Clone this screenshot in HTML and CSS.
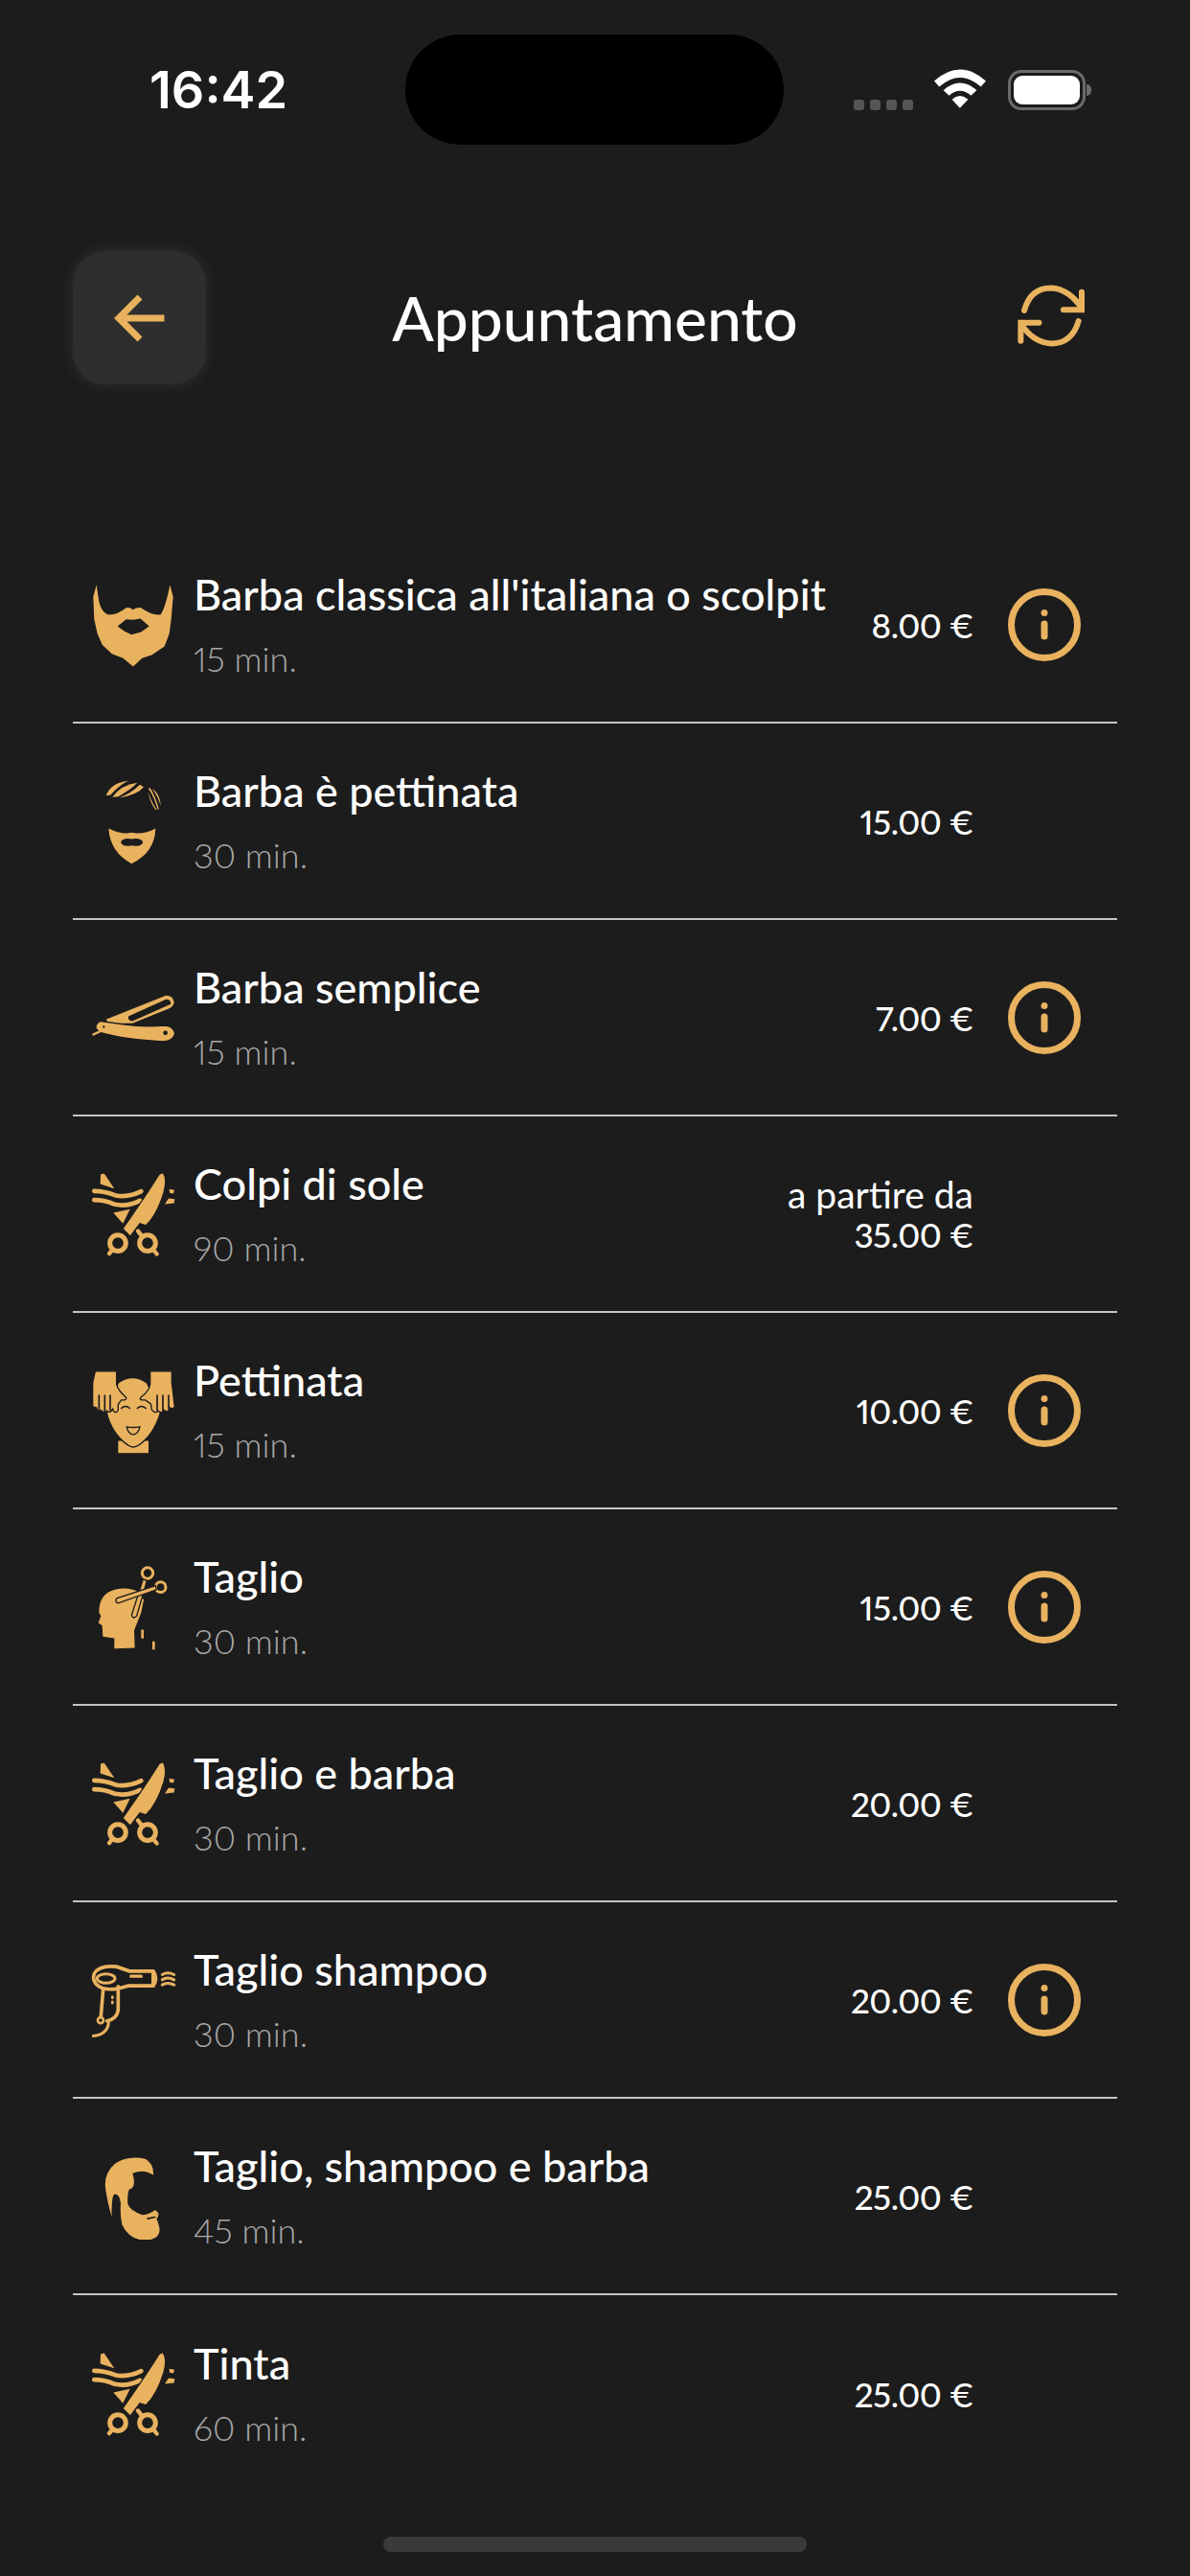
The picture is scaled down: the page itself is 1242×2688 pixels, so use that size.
FILE: index.html
```html
<!DOCTYPE html>
<html lang="it">

<head>
    <meta charset="utf-8">
    <title>Appuntamento</title>
    <link rel="stylesheet" href="styles.css">
</head>

<body>
    <svg class="defs" xmlns="http://www.w3.org/2000/svg">
        <symbol id="scissors" viewBox="72 67.5 270 270">
            <path class="fill" d="M105 78L116 75L148 122L104 108Z" />
            <path class="fill" d="M145 198L197 187L175 232Z" />
            <path class="line" stroke-width="14" d="M85 130Q118 130 150 143Q190 152 232 131" />
            <path class="line" stroke-width="14" d="M85 158Q118 158 150 172Q190 180 228 160" />
            <path class="fill gap" d="M300 72Q315 90 303 135Q282 205 247 238L228 232L198 272L174 248Q250 140 288 78Z" />
            <circle class="line" stroke-width="15" cx="159" cy="293" r="25" />
            <circle class="line" stroke-width="15" cx="252" cy="293" r="25" />
            <path class="line" stroke-width="13" d="M222 255L232 268M132 326L140 316M281 327L272 316" />
            <path class="fill" d="M320 124L336 127L333 138L321 136Z" />
            <path class="fill" d="M318 153L337 155L335 168L306 171Z" />
        </symbol>
        <symbol id="info" viewBox="0 0 76 76">
            <circle class="line" stroke-width="7" cx="38" cy="38" r="34.5" />
            <circle class="fill" cx="38" cy="25.500" r="3.500" />
            <path class="line" stroke-width="7" d="M38 37V50" />
        </symbol>
    </svg>

    <div class="status">
        <span class="clock">16:42</span>
        <div class="island"></div>
        <div class="status-right">
            <div class="dots"><i></i><i></i><i></i><i></i></div>
            <svg class="wifi" viewBox="285 65 163 122">
                <path d="M285 102Q366 30 448 102L432 120Q366 62 301 120Z" />
                <path d="M314 131Q366 85 419 131L401 148Q366 118 332 148Z" />
                <path d="M341 160Q366 138 392 160L366 187Z" />
            </svg>
            <div class="battery">
                <div class="battery-fill"></div>
            </div>
            <div class="battery-cap"></div>
        </div>
    </div>

    <header class="top">
        <div class="back">
            <svg viewBox="0 0 60 60" width="60" height="60">
                <path class="line arrow" stroke-width="7" d="M30 8L8 30L30 52M10 30H55.500" />
            </svg>
        </div>
        <h1 class="title">Appuntamento</h1>
        <svg class="refresh" viewBox="545 742 212 193">
            <path class="line" stroke-width="18" d="M566 822Q585 752 650 752Q705 755 745 815M745 765V820H688" />
            <path class="line" stroke-width="18" d="M735 855Q715 925 650 925Q595 922 556 865M555 917V860H612" />
        </svg>
    </header>

    <main class="list">
        <div class="row">
            <svg class="pic" viewBox="102 142.500 270 270">
                <path class="fill" fill-rule="evenodd" d="M122 152L130 205Q138 240 160 246Q190 245 215 224Q228 222 236 230Q248 222 262 224Q290 246 322 246Q338 225 352 152L362 190L356 260L350 305L335 345L295 372L265 382L237 408L205 382L170 368L140 340L125 305L115 260L112 190ZM188 282L215 260L237 262L260 258L287 282L262 300L232 308L210 298Z" />
            </svg>
            <div class="body">
                <div class="name">Barba classica all'italiana o scolpita</div>
                <div class="time">15 min.</div>
            </div>
            <div class="price">8.00 €</div>
            <div class="slot"><svg class="info"><use href="#info" /></svg></div>
        </div>

        <div class="row">
            <svg class="pic" viewBox="102 97.500 270 270">
                <path class="fill" d="M152 152Q168 112 222 106Q195 118 166 150Z" />
                <path class="fill" d="M172 157Q200 118 250 112Q228 135 190 155Z" />
                <path class="fill" d="M192 159Q228 148 258 118L270 125Q250 150 192 159Z" />
                <path class="fill" d="M284 130Q300 150 314 195L318 195Q305 150 290 128ZM296 130Q320 145 324 185Q312 150 296 130ZM284 140Q295 175 312 197L306 195Q288 170 284 140Z" />
                <path class="fill" fill-rule="evenodd" d="M160 255Q200 275 232 268Q270 275 307 255Q305 330 232 365Q165 330 160 255ZM198 298Q205 283 232 288Q260 283 268 298Q262 315 232 308Q205 315 198 298Z" />
            </svg>
            <div class="body">
                <div class="name">Barba è pettinata</div>
                <div class="time">30 min.</div>
            </div>
            <div class="price">15.00 €</div>
            <div class="slot"></div>
        </div>

        <div class="row">
            <svg class="pic" viewBox="72 52.500 270 270">
                <path class="fill" fill-rule="evenodd" d="M122 193L310 118Q332 118 335 140Q332 152 320 158L205 205L130 205ZM192 183L310 130Q325 130 325 145L205 198Q190 198 192 183Z" />
                <path class="fill gap" d="M105 198Q88 205 90 220Q100 235 120 238Q180 255 300 262Q335 260 338 235Q330 212 305 212Q240 218 175 208Z" />
                <path class="line" stroke-width="7" d="M82 240L104 230" />
                <circle class="cut" cx="308" cy="235" r="7" />
                <circle class="cut" cx="115" cy="216" r="3.500" />
            </svg>
            <div class="body">
                <div class="name">Barba semplice</div>
                <div class="time">15 min.</div>
            </div>
            <div class="price">7.00 €</div>
            <div class="slot"><svg class="info"><use href="#info" /></svg></div>
        </div>

        <div class="row">
            <svg class="pic"><use href="#scissors" /></svg>
            <div class="body">
                <div class="name">Colpi di sole</div>
                <div class="time">90 min.</div>
            </div>
            <div class="price"><span class="from">a partire da</span>35.00 €</div>
            <div class="slot"></div>
        </div>

        <div class="row">
            <svg class="pic" viewBox="72 82.500 270 270">
                <path class="fill" d="M160 312H255V350H160Z" />
                <path class="fill gap" d="M160 130Q205 98 250 130L292 225Q270 295 225 325Q207 338 190 325Q140 290 124 225Z" />
                <path class="fill gap" d="M88 94H155V135Q160 155 185 176Q188 186 170 184L160 198V215Q155 228 145 218L143 212Q135 228 125 218Q115 228 106 216Q95 222 92 208L80 205V130Z" />
                <path class="fill gap" d="M260 94H328V130L337 205Q330 215 322 208Q315 228 305 216Q295 228 285 218Q275 228 265 214L262 196L245 184Q222 186 232 175Q258 155 260 135Z" />
                <path class="cut-line" d="M100 170V215M118 170V218M135 170V216M282 170V216M300 170V218M318 170V210M170 210Q183 198 196 210M220 210Q233 198 246 210" />
                <path class="fill gap" d="M187 268Q207 272 228 268Q222 292 207 292Q192 292 187 268Z" />
            </svg>
            <div class="body">
                <div class="name">Pettinata</div>
                <div class="time">15 min.</div>
            </div>
            <div class="price">10.00 €</div>
            <div class="slot"><svg class="info"><use href="#info" /></svg></div>
        </div>

        <div class="row">
            <svg class="pic" viewBox="72 697.500 270 270">
                <path class="fill" d="M100 850Q100 790 150 778Q190 768 225 785L240 810L232 850L210 905L212 960L148 962V930L112 925L110 890L98 882L106 860Z" />
                <circle class="line" stroke-width="9" cx="252" cy="726" r="17" />
                <circle class="line" stroke-width="9" cx="293" cy="770" r="16" />
                <path class="fill gap" d="M238 745L250 750L218 860Q208 872 202 858Z" />
                <path class="fill gap" d="M277 765L280 778L160 820Q148 815 155 805Z" />
                <path class="fill" d="M232 903H240V931H232ZM267 940H275V965H267Z" />
            </svg>
            <div class="body">
                <div class="name">Taglio</div>
                <div class="time">30 min.</div>
            </div>
            <div class="price">15.00 €</div>
            <div class="slot"><svg class="info"><use href="#info" /></svg></div>
        </div>

        <div class="row">
            <svg class="pic"><use href="#scissors" /></svg>
            <div class="body">
                <div class="name">Taglio e barba</div>
                <div class="time">30 min.</div>
            </div>
            <div class="price">20.00 €</div>
            <div class="slot"></div>
        </div>

        <div class="row">
            <svg class="pic" viewBox="72 97.500 270 270">
                <path class="line" stroke-width="11" d="M155 128Q100 122 85 150Q75 180 110 195Q140 205 190 188H270Q285 165 270 142H195Q175 135 155 128Z" />
                <ellipse class="line" stroke-width="9" cx="122" cy="165" rx="28" ry="14" />
                <path class="line" stroke-width="10" d="M200 158H232M269 148V183" />
                <path class="line" stroke-width="11" d="M113 200L106 283M160 190V265Q155 292 125 298" />
                <circle class="line" stroke-width="8" cx="105" cy="296" r="9" />
                <path class="line" stroke-width="9" d="M130 305Q125 340 82 345" />
                <path class="line" stroke-width="8" d="M142 222V226M142 238V242" />
                <path class="line" stroke-width="9" d="M298 153Q315 143 335 153M298 169Q315 158 335 169M298 185Q315 175 335 185" />
            </svg>
            <div class="body">
                <div class="name">Taglio shampoo</div>
                <div class="time">30 min.</div>
            </div>
            <div class="price">20.00 €</div>
            <div class="slot"><svg class="info"><use href="#info" /></svg></div>
        </div>

        <div class="row">
            <svg class="pic" viewBox="72 712.500 270 270">
                <path class="fill" d="M270 780Q272 745 245 730Q190 718 150 745Q115 775 120 820Q125 860 140 912Q138 850 148 840Q165 838 168 870Q165 900 172 935Q195 985 250 985Q290 980 290 950Q285 925 280 918Q295 900 275 890Q255 905 235 905Q195 890 190 870Q188 835 195 825Q218 820 205 775Q240 760 270 780Z" />
                <path class="cut-line" d="M252 917L275 912" />
                <circle class="cut" cx="162" cy="892" r="5" />
            </svg>
            <div class="body">
                <div class="name">Taglio, shampoo e barba</div>
                <div class="time">45 min.</div>
            </div>
            <div class="price">25.00 €</div>
            <div class="slot"></div>
        </div>

        <div class="row">
            <svg class="pic"><use href="#scissors" /></svg>
            <div class="body">
                <div class="name">Tinta</div>
                <div class="time">60 min.</div>
            </div>
            <div class="price">25.00 €</div>
            <div class="slot"></div>
        </div>
    </main>

    <div class="home-bar"></div>
</body>

</html>
```

FILE: styles.css
```css
html,
body {
    margin: 0;
    height: 2688px;
    overflow: hidden;
}

body {
    background: #1c1c1c;
    color: #fff;
    font-family: "Lato", "Noto Sans", sans-serif;
    font-variant-numeric: proportional-nums;
}

.defs {
    display: none;
}

.fill {
    fill: #e9b25f;
}

.line {
    fill: none;
    stroke: #e9b25f;
    stroke-linecap: round;
}

.arrow {
    stroke-linecap: butt;
}

.gap {
    stroke: #1c1c1c;
    stroke-width: 4;
}

.cut {
    fill: #1c1c1c;
}

.cut-line {
    fill: none;
    stroke: #1c1c1c;
    stroke-width: 5;
    stroke-linecap: round;
}

/* status bar */
.status {
    display: grid;
    grid-template-columns: 423px 395px 1fr;
    align-items: center;
    height: 115px;
    padding-top: 36px;
}

.clock {
    padding-left: 156px;
    font-family: "Inter", sans-serif;
    font-size: 54px;
    font-weight: 600;
    line-height: 60px;
}

.island {
    height: 115px;
    border-radius: 58px;
    background: #000;
}

.status-right {
    display: flex;
    align-items: center;
    justify-content: flex-end;
    padding-right: 103px;
}

.dots {
    display: flex;
    gap: 6px;
    margin-top: 32px;
    margin-right: 22px;
}

.dots i {
    width: 11px;
    height: 11px;
    border-radius: 3px;
    background: #555;
}

.wifi {
    width: 54px;
    height: 41px;
    margin-right: 23px;
    margin-bottom: 2px;
    fill: #fff;
}

.battery {
    box-sizing: border-box;
    width: 81px;
    height: 42px;
    padding: 3px;
    border: 3px solid #6b6b6b;
    border-radius: 14px;
}

.battery-fill {
    height: 100%;
    border-radius: 9px;
    background: #fff;
}

.battery-cap {
    width: 5px;
    height: 12px;
    margin-left: 1px;
    border-radius: 0 6px 6px 0;
    background: #6b6b6b;
}

/* header */
.top {
    display: grid;
    grid-template-columns: 1fr auto 1fr;
    align-items: center;
    height: 139px;
    margin-top: 111px;
    padding: 0 76px;
}

.back {
    display: flex;
    align-items: center;
    justify-content: center;
    width: 139px;
    height: 139px;
    border-radius: 34px;
    background: #2e2e2e;
    box-shadow: 0 0 14px rgba(70, 70, 70, 0.55);
}

.title {
    margin: 0;
    font-size: 64px;
    font-weight: 500;
    line-height: 80px;
}

.refresh {
    justify-self: end;
    width: 71px;
    height: 65px;
    margin-right: 33px;
    margin-bottom: 4px;
}

/* services */
.list {
    margin: 149px 76px 0;
}

.row {
    display: flex;
    align-items: center;
    box-sizing: border-box;
    height: 205px;
    padding-left: 18px;
    border-bottom: 2px solid #c4c4c4;
}

.row:last-child {
    border-bottom: none;
}

.pic {
    flex: none;
    width: 90px;
    height: 90px;
    margin-right: 18px;
}

.body {
    flex: 1;
    min-width: 0;
    padding-bottom: 2px;
    overflow: hidden;
}

.name {
    font-size: 45px;
    font-weight: 500;
    line-height: 56px;
    white-space: nowrap;
}

.time {
    margin-top: 17px;
    color: #a8a8a8;
    font-size: 36px;
    font-weight: 300;
    line-height: 44px;
}

.price {
    flex: none;
    min-width: 154px;
    margin-right: -2px;
    font-size: 35px;
    font-weight: 500;
    letter-spacing: -0.5px;
    line-height: 42px;
    text-align: right;
}

.from {
    display: block;
    font-size: 39px;
    font-weight: 400;
    letter-spacing: 0;
}

.slot {
    flex: none;
    width: 76px;
    height: 76px;
    margin: 0 38px;
}

.info {
    display: block;
    width: 76px;
    height: 76px;
}

.home-bar {
    position: absolute;
    left: 400px;
    top: 2647px;
    width: 442px;
    height: 16px;
    border-radius: 8px;
    background: #3a3a3a;
}
```
